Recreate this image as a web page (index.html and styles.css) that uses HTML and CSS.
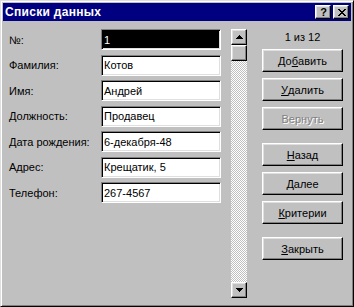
FILE: index.html
```html
<!DOCTYPE html>
<html lang="ru">
<head>
<meta charset="utf-8">
<title>Списки данных</title>
<link rel="stylesheet" href="styles.css">
</head>
<body>
<div class="window">
  <div class="titlebar">
    <span class="title">Списки данных</span>
    <div class="tbtns">
      <span class="tbtn help">?</span>
      <span class="tbtn close"><svg width="8" height="7" viewBox="0 0 8 7"><path d="M0 0h2v1h1v1h2V1h1V0h2v1H7v1H6v1H5v1h1v1h1v1h1v1H6V6H5V5H3v1H2v1H0V6h1V5h1V4h1V3H2V2H1V1H0z" fill="#000"/></svg></span>
    </div>
  </div>
  <div class="content">
    <div class="form">
      <span class="label">№:</span><div class="field sel"><span class="seltext">1</span></div>
      <span class="label">Фамилия:</span><div class="field">Котов</div>
      <span class="label">Имя:</span><div class="field">Андрей</div>
      <span class="label">Должность:</span><div class="field">Продавец</div>
      <span class="label">Дата рождения:</span><div class="field">6-декабря-48</div>
      <span class="label">Адрес:</span><div class="field">Крещатик, 5</div>
      <span class="label">Телефон:</span><div class="field">267-4567</div>
    </div>
    <div class="scrollbar">
      <div class="raised sbtn"><svg width="7" height="4" viewBox="0 0 7 4"><path d="M3 0h1v1h1v1h1v1h1v1H0V3h1V2h1V1h1z" fill="#000"/></svg></div>
      <div class="raised thumb"></div>
      <div class="track"></div>
      <div class="raised sbtn"><svg width="7" height="4" viewBox="0 0 7 4"><path d="M0 0h7v1H6v1H5v1H4v1H3V3H2V2H1V1H0z" fill="#000"/></svg></div>
    </div>
    <div class="actions">
      <div class="counter">1 из 12</div>
      <div class="btn">До<u>б</u>авить</div>
      <div class="btn"><u>У</u>далить</div>
      <div class="btn disabled">Вернуть</div>
      <div class="btn sep"><u>Н</u>азад</div>
      <div class="btn"><u>Д</u>алее</div>
      <div class="btn"><u>К</u>ритерии</div>
      <div class="btn sep"><u>З</u>акрыть</div>
    </div>
  </div>
</div>
</body>
</html>
```

FILE: styles.css
```css
html, body {
  margin: 0;
  padding: 0;
  background: #c0c0c0;
}
body {
  font-family: "Liberation Sans", Arial, sans-serif;
  font-size: 11px;
  color: #000;
}
.window {
  box-sizing: border-box;
  width: 354px;
  height: 307px;
  background: #c0c0c0;
  border: 1px solid;
  border-color: #dfdfdf #000 #000 #dfdfdf;
  box-shadow: inset 1px 1px #fff, inset -1px -1px #808080;
  padding: 2px;
  display: flex;
  flex-direction: column;
}
.titlebar {
  height: 18px;
  background: #000080;
  display: flex;
  align-items: center;
  justify-content: space-between;
  padding: 0 2px 0 2px;
}
.title {
  color: #fff;
  font-weight: bold;
  font-size: 12px;
  letter-spacing: 0.3px;
}
.tbtns {
  display: flex;
  gap: 2px;
}
.tbtn, .raised, .btn {
  box-sizing: border-box;
  background: #c0c0c0;
  border: 1px solid;
  border-color: #fff #000 #000 #fff;
  box-shadow: inset -1px -1px #808080, inset 1px 1px #dfdfdf;
}
.tbtn {
  width: 16px;
  height: 14px;
  display: flex;
  align-items: center;
  justify-content: center;
}
.help {
  font-weight: bold;
  font-size: 11px;
  line-height: 12px;
  padding-left: 1px;
}
.close svg {
  display: block;
  margin-left: 1px;
}
.content {
  flex: 1;
  display: flex;
  padding: 8px 0 0 6px;
}
.form {
  display: grid;
  grid-template-columns: 92px 120px;
  grid-auto-rows: 21px;
  row-gap: 4.5px;
  align-content: start;
  align-items: center;
}
.field {
  box-sizing: border-box;
  height: 21px;
  background: #fff;
  border: 1px solid;
  border-color: #808080 #fff #fff #808080;
  box-shadow: inset 1px 1px #000, inset -1px -1px #dfdfdf;
  padding: 0 2px 0 2px;
  display: flex;
  align-items: center;
  white-space: nowrap;
}
.field.sel {
  background: #000;
}
.seltext {
  color: #fff;
}
.scrollbar {
  margin-left: 10px;
  width: 16px;
  height: 269px;
  display: flex;
  flex-direction: column;
}
.sbtn {
  height: 16px;
  display: flex;
  align-items: center;
  justify-content: center;
}
.sbtn svg {
  display: block;
}
.thumb {
  height: 16px;
}
.track {
  flex: 1;
  background-image: conic-gradient(#fff 25%, #c0c0c0 0 50%, #fff 0 75%, #c0c0c0 0);
  background-size: 2px 2px;
}
.actions {
  margin-left: 15px;
  width: 81px;
  display: flex;
  flex-direction: column;
}
.counter {
  height: 20px;
  line-height: 16px;
  text-align: center;
}
.btn {
  height: 23px;
  margin-top: 6px;
  display: flex;
  align-items: center;
  justify-content: center;
}
.counter + .btn {
  margin-top: 0;
}
.btn.sep {
  margin-top: 13px;
}
.btn.disabled {
  color: #808080;
  text-shadow: 1px 1px #fff;
}
```
